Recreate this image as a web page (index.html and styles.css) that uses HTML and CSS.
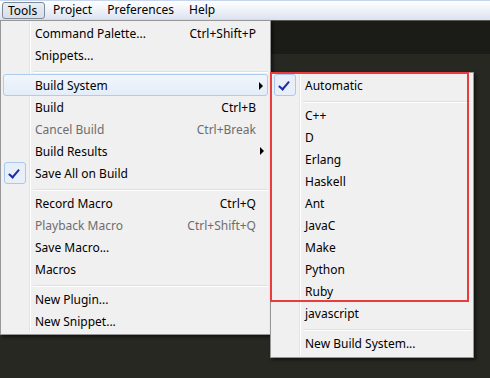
FILE: index.html
```html
<!DOCTYPE html>
<html lang="en">
<head>
  <meta charset="UTF-8" />
  <title>Sublime Text - Tools menu</title>
  <link rel="stylesheet" href="styles.css">
</head>
<body>

  <div class="menubar">
    <span class="menubar-item open">Tools</span>
    <span class="menubar-item">Project</span>
    <span class="menubar-item">Preferences</span>
    <span class="menubar-item">Help</span>
  </div>

  <div class="editor">
    <div class="tabbar"></div>
    <div class="code"></div>
  </div>

  <!-- Tools dropdown -->
  <div class="menu main-menu">
    <div class="item"><span class="label">Command Palette...</span><span class="key">Ctrl+Shift+P</span></div>
    <div class="item"><span class="label">Snippets...</span></div>
    <div class="sep"></div>
    <div class="item active"><span class="label">Build System</span><span class="arrow"></span></div>
    <div class="item"><span class="label">Build</span><span class="key">Ctrl+B</span></div>
    <div class="item disabled"><span class="label">Cancel Build</span><span class="key">Ctrl+Break</span></div>
    <div class="item"><span class="label">Build Results</span><span class="arrow"></span></div>
    <div class="item checked"><span class="label">Save All on Build</span></div>
    <div class="sep"></div>
    <div class="item"><span class="label">Record Macro</span><span class="key">Ctrl+Q</span></div>
    <div class="item disabled"><span class="label">Playback Macro</span><span class="key">Ctrl+Shift+Q</span></div>
    <div class="item"><span class="label">Save Macro...</span></div>
    <div class="item"><span class="label">Macros</span></div>
    <div class="sep"></div>
    <div class="item"><span class="label">New Plugin...</span></div>
    <div class="item"><span class="label">New Snippet...</span></div>
  </div>

  <!-- Build System submenu -->
  <div class="menu sub-menu">
    <div class="item checked"><span class="label">Automatic</span></div>
    <div class="sep"></div>
    <div class="item"><span class="label">C++</span></div>
    <div class="item"><span class="label">D</span></div>
    <div class="item"><span class="label">Erlang</span></div>
    <div class="item"><span class="label">Haskell</span></div>
    <div class="item"><span class="label">Ant</span></div>
    <div class="item"><span class="label">JavaC</span></div>
    <div class="item"><span class="label">Make</span></div>
    <div class="item"><span class="label">Python</span></div>
    <div class="item"><span class="label">Ruby</span></div>
    <div class="item"><span class="label">javascript</span></div>
    <div class="sep"></div>
    <div class="item"><span class="label">New Build System...</span></div>
    <div class="mark"></div>
  </div>

</body>
</html>
```

FILE: styles.css
```css
body {
  margin: 0;
  width: 490px;
  height: 378px;
  overflow: hidden;
  position: relative;
  font-family: "Noto Sans", "Liberation Sans", sans-serif;
  font-size: 12px;
  color: #000;
  background: #272822;
}

.menubar {
  height: 20px;
  display: flex;
  align-items: center;
  padding-left: 2px;
  background: linear-gradient(#ffffff, #f1f4fa 40%, #dbe2f0);
  border-top: 1px solid #c5d5ec;
  box-sizing: border-box;
}

.menubar-item {
  padding: 0 7px 0 8px;
  height: 17px;
  line-height: 16px;
  box-sizing: border-box;
}

.menubar-item.open {
  border: 1px solid #7e8a99;
  border-radius: 3px;
  background: linear-gradient(#e9edf3, #d8dee8);
  padding: 0 5px;
  width: 43px;
}

.editor .tabbar {
  height: 34px;
  background: #1b1b17;
  border-top: 1px solid #5a5a55;
  box-sizing: border-box;
}

.menu {
  position: absolute;
  background: #f0f0f0;
  border: 1px solid #979797;
  box-sizing: border-box;
  padding: 1px 2px 2px 2px;
  box-shadow: 2px 2px 3px rgba(0, 0, 0, 0.5);
}

/* gutter line next to the check column */
.menu::before {
  content: "";
  position: absolute;
  top: 1px;
  bottom: 2px;
  left: 28px;
  width: 1px;
  background: #e2e3e3;
  border-right: 1px solid #ffffff;
}

.main-menu {
  left: 0;
  top: 20px;
  width: 271px;
  height: 315px;
}

.sub-menu {
  left: 270px;
  top: 72px;
  width: 204px;
  height: 286px;
}

.item {
  position: relative;
  display: flex;
  align-items: center;
  height: 22px;
  padding-left: 32px;
  padding-right: 12px;
  white-space: nowrap;
}

.item .label {
  flex: 1;
}

.item.disabled {
  color: #6d6d6d;
}

.item.active {
  background: linear-gradient(#f2f6fc, #e3ecf8);
  border: 1px solid #aecbf0;
  border-radius: 3px;
  padding-left: 31px;
  padding-right: 11px;
  height: 22px;
  box-sizing: border-box;
}

.item .arrow {
  position: absolute;
  right: 4px;
  top: 7px;
  width: 0;
  height: 0;
  border-top: 4px solid transparent;
  border-bottom: 4px solid transparent;
  border-left: 4px solid #000;
}

.item.checked::before {
  content: "";
  position: absolute;
  left: 1px;
  top: 0;
  width: 20px;
  height: 20px;
  border: 1px solid #a8c8ef;
  border-radius: 3px;
  background: #e8eff9;
}

.item.checked::after {
  content: "";
  position: absolute;
  left: 8px;
  top: 5px;
  width: 4px;
  height: 9px;
  border-right: 2px solid #1c2fa6;
  border-bottom: 2px solid #1c2fa6;
  transform: rotate(40deg);
}

.sep {
  height: 8px;
  margin-left: 28px;
  position: relative;
}

.sep::after {
  content: "";
  position: absolute;
  left: 2px;
  right: 0;
  top: 5px;
  height: 1px;
  background: #e0e0e0;
  border-bottom: 1px solid #ffffff;
}

.sub-menu .mark {
  position: absolute;
  left: -1px;
  top: -1px;
  width: 199px;
  height: 230px;
  border: 2px solid #ea3c3c;
  box-sizing: border-box;
}
```
